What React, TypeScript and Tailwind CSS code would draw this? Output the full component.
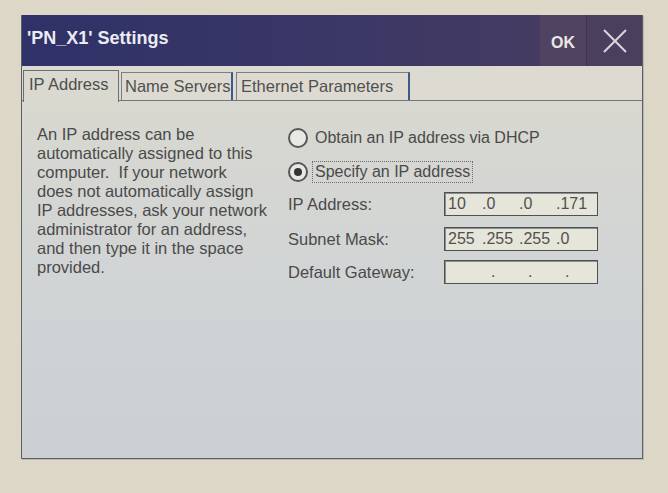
import React from "react";

const font = { fontFamily: '"Liberation Sans", Arial, sans-serif' };

function IpBox({ fields }: { fields: string[] }) {
  return (
    <div className="w-[154px] h-[24px] border border-[#4f5052] bg-[#e6e5d9] shadow-[inset_1px_1px_0_#8d8e90] flex items-center pl-[3px] text-[16px] text-[#505050] leading-none">
      {fields.map((f, i) => (
        <span key={i} className={i === 0 ? "w-[34px] whitespace-pre" : "w-[37px] whitespace-pre"}>
          {f}
        </span>
      ))}
    </div>
  );
}

function Radio({ checked, label, focus }: { checked?: boolean; label: string; focus?: boolean }) {
  return (
    <div className="flex items-center h-[22px]">
      <div className="w-[20px] h-[20px] rounded-full border-[2px] border-[#55575b] bg-[#e9e8e2] flex items-center justify-center shrink-0">
        {checked && <div className="w-[8px] h-[8px] rounded-full bg-[#333438]" />}
      </div>
      <span
        className={
          "ml-[4px] pl-[2px] pr-[2px] h-[22px] flex items-center text-[16px] text-[#4a4a4a] " +
          (focus ? "border border-dotted border-[#6a6c70]" : "border border-transparent")
        }
      >
        {label}
      </span>
    </div>
  );
}

export default function App() {
  return (
    <div
      className="w-[668px] h-[493px] bg-[#dcd7c7] pl-[21px] pt-[15px]"
      style={font}
    >
      <div className="w-[622px] h-[444px] flex flex-col border-l border-r border-b border-[#5d5f66] shadow-[1px_1px_0_#b9b6ac]">
        {/* Title bar */}
        <div className="h-[51px] flex items-stretch bg-gradient-to-r from-[#2f3168] via-[#3a3766] to-[#4a3d60]">
          <div className="flex-1 flex items-center pl-[5px] pb-[5px] text-[18px] font-bold text-[#ecebf2]">
            'PN_X1' Settings
          </div>
          <div className="w-[46px] flex items-center justify-center bg-[#4f4361] text-[16px] font-bold text-[#ece7e4] pt-[5px]">
            OK
          </div>
          <div className="w-[1px] bg-[#3f3552]" />
          <div className="w-[55px] flex items-center justify-center bg-[#4b3f5e]">
            <svg width="26" height="26" viewBox="0 0 26 26">
              <path d="M2 2 L24 24 M24 2 L2 24" stroke="#dcd6da" strokeWidth="2" fill="none" />
            </svg>
          </div>
        </div>
        {/* Tab strip */}
        <div className="h-[35px] bg-[#dddbd1] flex items-end relative">
          <div className="h-[32px] ml-[1px] w-[96px] border-t border-l border-r border-[#6c6e72] bg-[#dad9d0] flex items-center pl-[5px] text-[16.5px] text-[#4d4d4d] relative z-10 -mb-[1px] pb-[5px]">
            IP Address
          </div>
          <div className="h-[28px] ml-[2px] w-[112px] border-t border-l border-[#7c7e82] border-r-2 border-r-[#3e5a8c] flex items-center pl-[3px] text-[16.5px] text-[#505050] mb-[1px]">
            Name Servers
          </div>
          <div className="h-[28px] ml-[3px] w-[174px] border-t border-l border-[#7c7e82] border-r-2 border-r-[#3e5a8c] flex items-center pl-[4px] text-[16.5px] text-[#505050] mb-[1px]">
            Ethernet Parameters
          </div>
          <div className="absolute left-0 right-0 bottom-0 h-[1px] bg-[#75777b]" />
        </div>
        {/* Panel */}
        <div className="flex-1 bg-gradient-to-b from-[#d8d8d0] via-[#d1d4d5] to-[#cbcfd3] flex pt-[24px]">
          <div className="w-[266px] pl-[15px] text-[16.5px] leading-[19px] text-[#4a4a4a]">
            An IP address can be
            <br />
            automatically assigned to this
            <br />
            computer.&nbsp; If your network
            <br />
            does not automatically assign
            <br />
            IP addresses, ask your network
            <br />
            administrator for an address,
            <br />
            and then type it in the space
            <br />
            provided.
          </div>
          <div className="flex flex-col pt-[2px]">
            <Radio label="Obtain an IP address via DHCP" />
            <div className="h-[12px]" />
            <Radio label="Specify an IP address" checked focus />
            <div className="h-[9px]" />
            <div className="flex items-center">
              <span className="w-[156px] text-[16.5px] text-[#4a4a4a]">IP Address:</span>
              <IpBox fields={["10", ".0", ".0", ".171"]} />
            </div>
            <div className="h-[10px]" />
            <div className="flex items-center">
              <span className="w-[156px] text-[16.5px] text-[#4a4a4a]">Subnet Mask:</span>
              <IpBox fields={["255", ".255", ".255", ".0"]} />
            </div>
            <div className="h-[8px]" />
            <div className="flex items-center">
              <span className="w-[156px] text-[16.5px] text-[#4a4a4a]">Default Gateway:</span>
              <IpBox fields={["", "  .", "  .", "  ."]} />
            </div>
          </div>
        </div>
      </div>
    </div>
  );
}
